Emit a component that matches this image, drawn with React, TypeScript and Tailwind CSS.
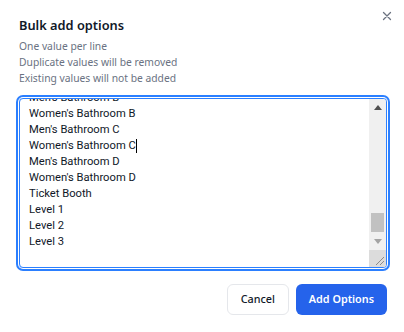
import React from "react";

const lines = [
  "Men's Bathroom B",
  "Women's Bathroom B",
  "Men's Bathroom C",
  "Women's Bathroom C",
  "Men's Bathroom D",
  "Women's Bathroom D",
  "Ticket Booth",
  "Level 1",
  "Level 2",
  "Level 3",
];

export default function App() {
  return (
    <div
      className="w-[404px] h-[332px] bg-white relative overflow-hidden"
      style={{ fontFamily: "'Noto Sans', 'Open Sans', sans-serif" }}
    >
      {/* Close */}
      <button className="absolute right-[12px] top-[11px] w-[10px] h-[10px]">
        <svg viewBox="0 0 10 10" width="10" height="10">
          <path d="M1.5 1.5 L8.5 8.5 M8.5 1.5 L1.5 8.5" stroke="#6b7280" strokeWidth="1.3" strokeLinecap="round" />
        </svg>
      </button>

      <div className="pl-[19px] pr-[17px] pt-[14px]">
        <h2 className="text-[12.8px] leading-[22px] font-semibold text-gray-900">Bulk add options</h2>
        <div className="mt-[2px] text-[10.3px] leading-[16px] text-gray-500">
          <p>One value per line</p>
          <p>Duplicate values will be removed</p>
          <p>Existing values will not be added</p>
        </div>

        {/* Textarea */}
        <div className="mt-[12px] h-[170px] rounded-[4px] border border-blue-500 ring-2 ring-blue-500 ring-offset-1 flex overflow-hidden">
          <div className="flex-1 overflow-hidden pl-[9px] font-['Roboto',sans-serif] text-[11.2px] leading-[16px] text-gray-900">
            <div className="-mt-[9px]">
              {lines.map((l, i) => (
                <div key={i} className="whitespace-pre">
                  {l}
                  {i === 3 && <span className="inline-block w-px h-[14px] bg-black align-middle" />}
                </div>
              ))}
            </div>
          </div>
          {/* Scrollbar */}
          <div className="w-[17px] flex flex-col bg-[#f0f0f0]">
            <div className="h-[17px] flex items-center justify-center">
              <svg width="8" height="5" viewBox="0 0 8 5"><path d="M0 5 L4 0 L8 5 Z" fill="#505050" /></svg>
            </div>
            <div className="flex-1 flex flex-col justify-end px-[2px]">
              <div className="h-[19px] bg-[#c1c1c1] mb-[1px]" />
            </div>
            <div className="h-[17px] flex items-center justify-center">
              <svg width="8" height="5" viewBox="0 0 8 5"><path d="M0 0 L8 0 L4 5 Z" fill="#a3a3a3" /></svg>
            </div>
            <div className="h-[17px] bg-[#dcdcdc] flex items-end justify-end pr-[2px] pb-[2px]">
              <svg width="9" height="9" viewBox="0 0 9 9">
                <path d="M1 9 L9 1 M5 9 L9 5" stroke="#8a8a8a" strokeWidth="1" />
              </svg>
            </div>
          </div>
        </div>

        {/* Buttons */}
        <div className="mt-[16px] flex justify-end gap-[7px]">
          <button className="h-[31px] px-[13px] rounded-[6px] border border-gray-200 bg-white text-[10.8px] text-gray-900 font-medium">
            Cancel
          </button>
          <button className="h-[31px] px-[13px] rounded-[6px] bg-[#2563eb] text-white text-[10.8px] font-semibold">
            Add Options
          </button>
        </div>
      </div>
    </div>
  );
}
